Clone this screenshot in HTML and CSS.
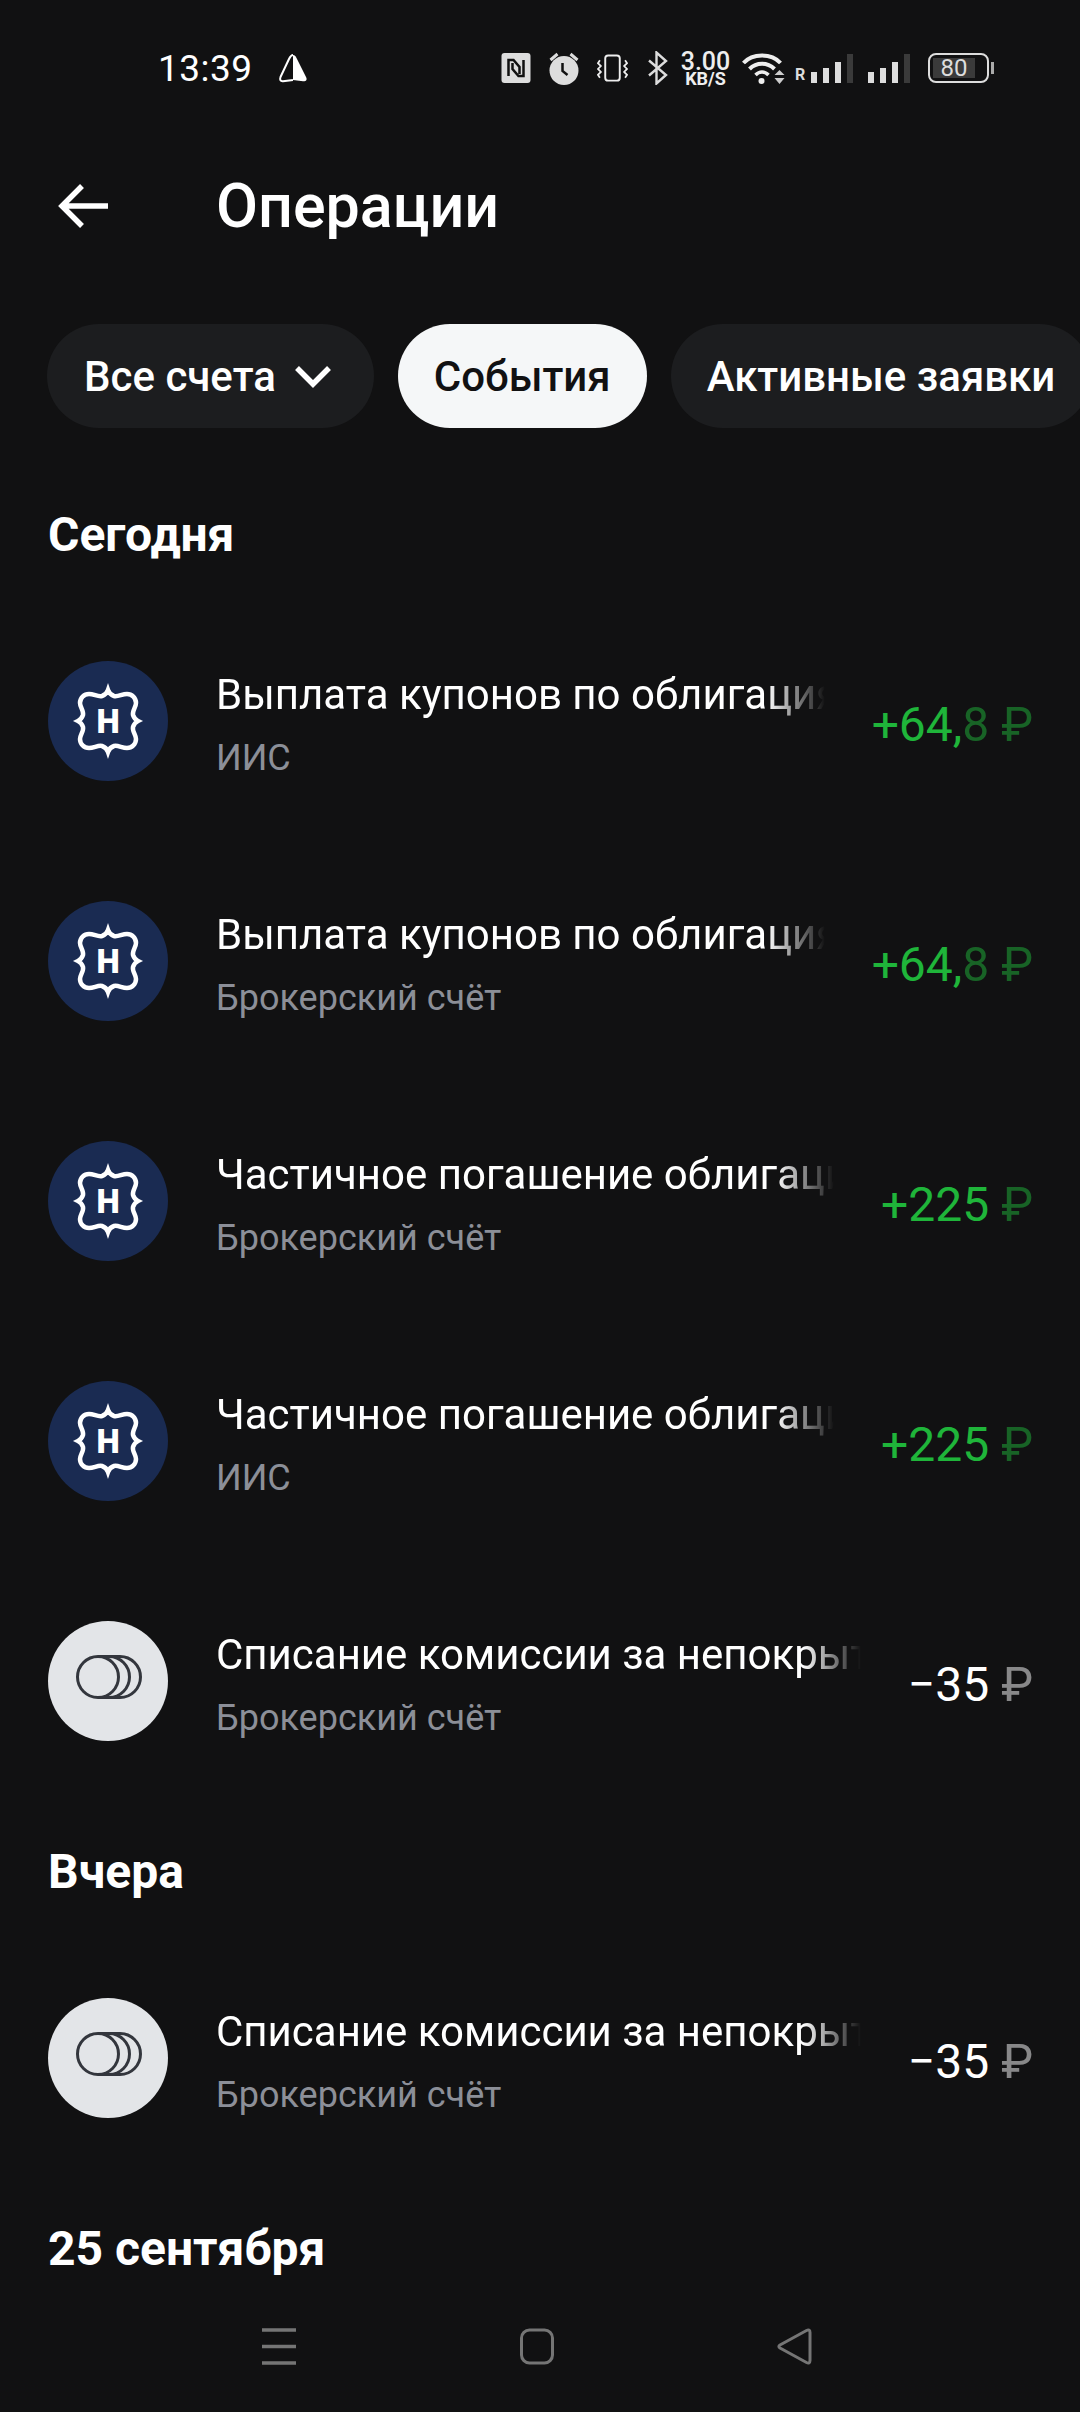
FILE: index.html
```html
<!DOCTYPE html>
<html lang="ru">
<head>
    <meta charset="UTF-8">
    <meta name="viewport" content="width=device-width, initial-scale=1.0">
    <title>Операции</title>
    <link rel="stylesheet" href="styles.css">
</head>
<body>
    <!-- Avatars repeat down the list -->
    <svg class="defs" aria-hidden="true">
        <symbol id="bond" viewBox="0 0 120 120">
            <circle cx="60" cy="60" r="60" fill="#1a2b52"/>
            <path d="M60 29C59 32 57 34 54 35C50 36 46 33 41 33C36 33 32 37 32 42C32 46 36 50 35 54C34 57 32 59 30 60C32 61 34 63 35 66C36 70 32 74 32 78C32 83 36 87 41 87C46 87 50 84 54 85C57 86 59 88 60 91C61 88 63 86 66 85C70 84 74 87 79 87C84 87 88 83 88 78C88 74 84 70 85 66C86 63 88 61 90 60C88 59 86 57 85 54C84 50 88 46 88 42C88 37 84 33 79 33C74 33 70 36 66 35C63 34 61 32 60 29Z" fill="none" stroke="#fff" stroke-width="4.500"/>
            <text x="60" y="71.500" text-anchor="middle" class="bond-letter">Н</text>
        </symbol>
        <symbol id="coins" viewBox="0 0 120 120">
            <circle cx="60" cy="60" r="60" fill="#e3e5e8"/>
            <g fill="none" stroke="#33363d" stroke-width="3">
                <circle cx="50" cy="56" r="20.500"/>
                <path d="M61 35.500A20.500 20.500 0 0 1 61 76.500"/>
                <path d="M50 35.500H72A20.500 20.500 0 0 1 72 76.500H50"/>
            </g>
        </symbol>
    </svg>

    <div class="screen">
        <div class="status-bar">
            <span class="time">13:39</span>
            <svg class="st-nav" width="30" height="30" viewBox="0 0 30 30">
                <path d="M15 2C17 2 18 4 19 6L28 24C29.500 27 28 28.500 25 28.300L15 27Z" fill="#fff"/>
                <path d="M15 2C13 2 12 4 11 6L2.500 24C1.500 27 2.500 28.500 5 28.300L15 27" fill="none" stroke="#fff" stroke-width="2" stroke-linejoin="round"/>
            </svg>
            <div class="status-icons">
                <svg width="30" height="30" viewBox="0 0 29 30">
                    <rect width="29" height="30" rx="3" fill="#ddd"/>
                    <path d="M7 23V7H12L18 14V21M22 7V23H17L11 16V10" fill="none" stroke="#111" stroke-width="2.500"/>
                </svg>
                <svg class="icon-alarm" width="32" height="34" viewBox="0 0 31 34">
                    <circle cx="15.500" cy="19.500" r="14.500" fill="#ddd"/>
                    <path d="M2 9L9 3M29 9L22 3" stroke="#ddd" stroke-width="3"/>
                    <path d="M14 12V20L19 24" fill="none" stroke="#111" stroke-width="2.500"/>
                </svg>
                <svg class="icon-vibrate" width="31" height="28" viewBox="0 0 32 28">
                    <rect x="8.500" y="1" width="15" height="26" rx="3" fill="none" stroke="#eee" stroke-width="2"/>
                    <path d="M3 6L1 9L4 12L1 15L4 18L1 21L3 24M29 6L31 9L28 12L31 15L28 18L31 21L29 24" fill="none" stroke="#eee" stroke-width="1.800"/>
                </svg>
                <svg class="icon-bt" width="21" height="34" viewBox="0 0 21 34">
                    <path d="M2 9.500L19 24L9.500 32.500V1.500L19 10L2 24.500" fill="none" stroke="#ddd" stroke-width="2.400"/>
                </svg>
                <div class="speed">
                    <span class="speed-value">3.00</span>
                    <span class="speed-unit">KB/S</span>
                </div>
                <svg class="icon-wifi" width="44" height="34" viewBox="0 0 43 34">
                    <path d="M2 12C11 2 30 2 39 12" fill="none" stroke="#eee" stroke-width="4"/>
                    <path d="M8 18C15 11 26 11 33 18" fill="none" stroke="#eee" stroke-width="4"/>
                    <path d="M14 24C18 20 23 20 27 24" fill="none" stroke="#eee" stroke-width="3.500"/>
                    <circle cx="20" cy="30" r="3" fill="#eee"/>
                    <path d="M33 24L38 19L43 24ZM33 27L38 33L43 27Z" fill="#ccc"/>
                </svg>
                <span class="roaming">R</span>
                <svg class="signal" width="42" height="30" viewBox="0 0 42 30">
                    <rect x="0" y="19" width="6" height="11" fill="#ddd"/>
                    <rect x="12" y="15" width="6" height="15" fill="#ddd"/>
                    <rect x="24" y="9" width="6" height="21" fill="#ddd"/>
                    <rect x="36" y="1" width="6" height="29" fill="#3a3a3a"/>
                </svg>
                <svg class="signal signal-second" width="42" height="30" viewBox="0 0 42 30">
                    <rect x="0" y="19" width="6" height="11" fill="#ddd"/>
                    <rect x="12" y="15" width="6" height="15" fill="#ddd"/>
                    <rect x="24" y="9" width="6" height="21" fill="#ddd"/>
                    <rect x="36" y="1" width="6" height="29" fill="#3a3a3a"/>
                </svg>
                <div class="battery">
                    <div class="battery-level">80</div>
                </div>
                <div class="battery-tip"></div>
            </div>
        </div>

        <div class="header">
            <svg class="back" width="52" height="46" viewBox="0 0 52 46">
                <path d="M50 23H5M24 3L4 23L24 43" fill="none" stroke="#fff" stroke-width="5.500"/>
            </svg>
            <h1>Операции</h1>
        </div>

        <div class="chips">
            <div class="chip chip-select">Все счета
                <svg width="38" height="24" viewBox="0 0 38 24">
                    <path d="M3 4L19 20L35 4" fill="none" stroke="#fff" stroke-width="5.500"/>
                </svg>
            </div>
            <div class="chip active">События</div>
            <div class="chip">Активные заявки</div>
        </div>

        <div class="list">
            <h2>Сегодня</h2>
            <div class="row">
                <svg class="avatar"><use href="#bond"/></svg>
                <div class="info">
                    <div class="name">Выплата купонов по облигациям</div>
                    <div class="account">ИИС</div>
                </div>
                <div class="amount plus">+64,<span class="faded">8 ₽</span></div>
            </div>
            <div class="row">
                <svg class="avatar"><use href="#bond"/></svg>
                <div class="info">
                    <div class="name">Выплата купонов по облигациям</div>
                    <div class="account">Брокерский счёт</div>
                </div>
                <div class="amount plus">+64,<span class="faded">8 ₽</span></div>
            </div>
            <div class="row">
                <svg class="avatar"><use href="#bond"/></svg>
                <div class="info">
                    <div class="name">Частичное погашение облигаций</div>
                    <div class="account">Брокерский счёт</div>
                </div>
                <div class="amount plus">+225 <span class="faded">₽</span></div>
            </div>
            <div class="row">
                <svg class="avatar"><use href="#bond"/></svg>
                <div class="info">
                    <div class="name">Частичное погашение облигаций</div>
                    <div class="account">ИИС</div>
                </div>
                <div class="amount plus">+225 <span class="faded">₽</span></div>
            </div>
            <div class="row">
                <svg class="avatar"><use href="#coins"/></svg>
                <div class="info">
                    <div class="name">Списание комиссии за непокрытую позицию</div>
                    <div class="account">Брокерский счёт</div>
                </div>
                <div class="amount">−35 <span class="faded">₽</span></div>
            </div>

            <h2>Вчера</h2>
            <div class="row">
                <svg class="avatar"><use href="#coins"/></svg>
                <div class="info">
                    <div class="name">Списание комиссии за непокрытую позицию</div>
                    <div class="account">Брокерский счёт</div>
                </div>
                <div class="amount">−35 <span class="faded">₽</span></div>
            </div>

            <h2>25 сентября</h2>
        </div>

        <div class="nav-bar">
            <svg width="36" height="37" viewBox="0 0 36 37">
                <path d="M1 2H35M1 18.500H35M1 35H35" stroke="#757575" stroke-width="3.500"/>
            </svg>
            <svg width="36" height="37" viewBox="0 0 36 37">
                <rect x="2.500" y="2" width="31" height="33" rx="8" fill="none" stroke="#757575" stroke-width="3"/>
            </svg>
            <svg width="36" height="37" viewBox="0 0 36 37">
                <path d="M33 4.500C33 2 31.500 1.500 29.500 2.500L3 17C1.500 18 1.500 19 3 20L29.500 34.500C31.500 35.500 33 35 33 32.500Z" fill="none" stroke="#757575" stroke-width="3"/>
            </svg>
        </div>
    </div>
</body>
</html>
```

FILE: styles.css
```css
* {
    box-sizing: border-box;
}
body {
    margin: 0;
    background-color: #111112;
    font-family: Roboto, "Noto Sans", sans-serif;
    color: #fff;
}
.defs {
    display: none;
}
.bond-letter {
    font-family: Roboto, sans-serif;
    font-size: 33px;
    font-weight: 900;
    fill: #fff;
}
.screen {
    width: 1080px;
    height: 2412px;
    display: flex;
    flex-direction: column;
    overflow: hidden;
}

/* Status bar */
.status-bar {
    height: 136px;
    flex-shrink: 0;
    display: flex;
    align-items: center;
    padding-left: 158px;
}
.time {
    font-size: 37px;
    letter-spacing: 0.5px;
    width: 120px;
}
.status-icons {
    margin-left: 193px;
    display: flex;
    align-items: center;
}
.icon-alarm {
    margin-left: 17px;
}
.icon-vibrate {
    margin-left: 17px;
}
.icon-bt {
    margin-left: 19px;
}
.speed {
    margin-left: 12px;
    width: 51px;
    display: flex;
    flex-direction: column;
    align-items: center;
    line-height: 1;
    font-weight: 500;
    color: #eee;
}
.speed-value {
    font-size: 25px;
    height: 21px;
}
.speed-unit {
    font-size: 18px;
    font-weight: 700;
}
.icon-wifi {
    margin-left: 10px;
}
.roaming {
    margin: 12px 0 0 10px;
    width: 10px;
    font-size: 16px;
    font-weight: 700;
    color: #ddd;
}
.signal {
    margin-left: 6px;
}
.signal-second {
    margin-left: 15px;
}
.battery {
    margin-left: 18px;
    width: 61px;
    height: 30px;
    border: 2px solid #ddd;
    border-radius: 8px;
    padding: 3px 0 3px 3px;
}
.battery-level {
    width: 42px;
    height: 20px;
    background-color: #3a3a3a;
    font-size: 24px;
    line-height: 20px;
    text-align: center;
    color: #ddd;
}
.battery-tip {
    width: 3px;
    height: 12px;
    background-color: #aaa;
    margin-left: 2px;
}

/* Header */
.header {
    height: 140px;
    flex-shrink: 0;
    display: flex;
    align-items: center;
    padding-left: 58px;
}
.back {
    margin-right: 106px;
}
h1 {
    margin: 0;
    font-size: 61px;
    font-weight: 500;
}

/* Filter chips */
.chips {
    margin-top: 48px;
    padding-left: 47px;
    display: flex;
    gap: 24px;
    flex-shrink: 0;
}
.chip {
    height: 104px;
    padding: 0 36px;
    border-radius: 52px;
    background-color: #1c1d1f;
    display: flex;
    align-items: center;
    gap: 18px;
    font-size: 42px;
    font-weight: 500;
    white-space: nowrap;
}
.chip-select {
    padding: 0 42px 0 37px;
}
.chip.active {
    background-color: #f5f7f8;
    color: #111112;
}

/* Operations */
.list {
    flex: 1;
    min-height: 0;
    margin-top: 36px;
    overflow: hidden;
}
h2 {
    margin: 41px 0 36px;
    padding-left: 48px;
    font-size: 48px;
    line-height: 60px;
    font-weight: 700;
}
.row {
    height: 240px;
    padding: 0 47px 0 48px;
    display: flex;
    align-items: center;
}
.avatar {
    width: 120px;
    height: 120px;
    flex-shrink: 0;
    margin-right: 48px;
}
.info {
    flex: 1;
    min-width: 0;
    margin-right: 47px;
    padding-top: 8px;
}
.name {
    font-size: 42px;
    line-height: 48px;
    white-space: nowrap;
    overflow: hidden;
    -webkit-mask-image: linear-gradient(to right, #000 calc(100% - 58px), transparent);
    mask-image: linear-gradient(to right, #000 calc(100% - 58px), transparent);
}
.account {
    margin-top: 18px;
    font-size: 36px;
    line-height: 42px;
    color: #8c8f98;
}
.amount {
    flex-shrink: 0;
    padding-top: 6px;
    font-size: 48px;
    white-space: nowrap;
}
.amount.plus {
    color: #1fb53a;
}
.faded {
    opacity: 0.5;
}

/* System navigation */
.nav-bar {
    height: 122px;
    flex-shrink: 0;
    display: flex;
    align-items: center;
    gap: 222px;
    padding: 0 0 10px 261px;
    background-color: #111112;
}
```
